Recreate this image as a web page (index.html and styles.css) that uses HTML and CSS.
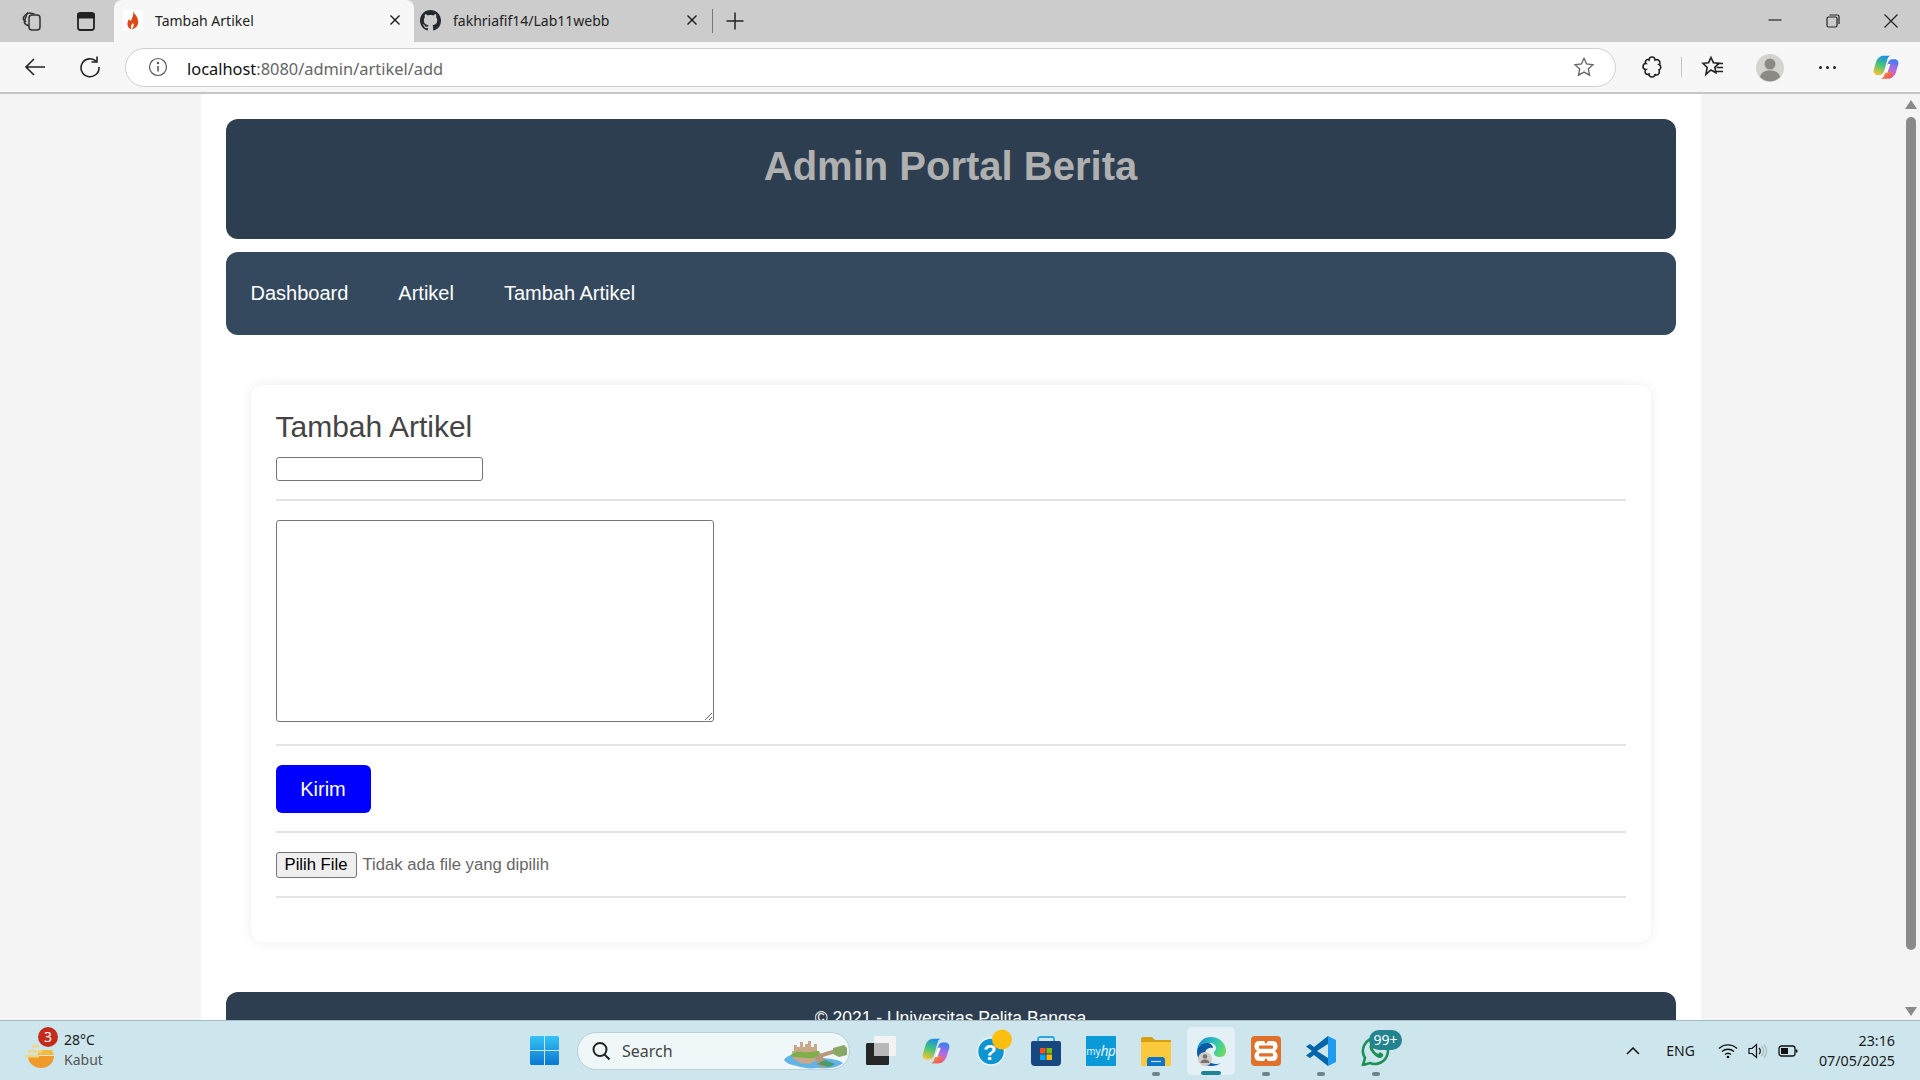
FILE: index.html
```html
<!DOCTYPE html>
<html lang="id">
<head>
  <meta charset="UTF-8" />
  <title>Tambah Artikel</title>
  <link rel="stylesheet" href="styles.css">
</head>
<body>

<svg class="defs" width="0" height="0">
  <defs>
    <linearGradient id="cpA" x1="0.6" y1="0" x2="0.3" y2="1">
      <stop offset="0" stop-color="#1a8fe8"/><stop offset="0.5" stop-color="#45c47a"/><stop offset="1" stop-color="#f2c531"/>
    </linearGradient>
    <linearGradient id="cpB" x1="0.6" y1="0" x2="0.4" y2="1">
      <stop offset="0" stop-color="#3a7df0"/><stop offset="0.5" stop-color="#b26be0"/><stop offset="1" stop-color="#f0609a"/>
    </linearGradient>
    <linearGradient id="cpC" x1="0" y1="0" x2="1" y2="1">
      <stop offset="0" stop-color="#f3a13a"/><stop offset="1" stop-color="#ea4c5a"/>
    </linearGradient>
    <linearGradient id="winG" x1="0" y1="0" x2="0" y2="1">
      <stop offset="0" stop-color="#35c3f5"/><stop offset="1" stop-color="#0a78d0"/>
    </linearGradient>
    <linearGradient id="edgeG" x1="0" y1="0.3" x2="1" y2="0.7">
      <stop offset="0" stop-color="#1b8ed6"/><stop offset="0.55" stop-color="#2fc7b6"/><stop offset="1" stop-color="#6fdc5a"/>
    </linearGradient>
    <symbol id="copilot" viewBox="0 0 32 32">
      <path d="M13 3h9c-2 0-3.500 1-4 3l-4 14c-.8 3-2.500 5-5 5H6c-3 0-5-3-4-6l3-10C6.500 6 9 3 13 3z" fill="url(#cpA)"/>
      <path d="M19 29h-9c2 0 3.500-1 4-3l4-14c.8-3 2.500-5 5-5h3c3 0 5 3 4 6l-3 10c-1.500 3-4 6-8 6z" fill="url(#cpB)"/>
      <path d="M10 29h9c1.500 0 3-.5 4-1.500l-1-6h-6l-2 4.500c-.8 2-2.500 3-4 3z" fill="url(#cpC)"/>
      <path d="M18 12.500h3l-3.500 10h-3z" fill="#fff"/>
    </symbol>
  </defs>
</svg>

<div class="tabbar">
  <div class="tab-tools">
    <svg class="ic" viewBox="0 0 24 24" fill="none" stroke="#333" stroke-width="1.500"><rect x="9" y="6" width="11" height="15" rx="3"/><path d="M9 17 6 15.500a3 3 0 0 1-1.500-3.500L6.500 6a3 3 0 0 1 3-2l5 1"/><path d="M6 13 4 11a3 3 0 0 1 .5-4L8 3.500"/></svg>
    <svg class="ic" viewBox="0 0 24 24" fill="none" stroke="#222" stroke-width="1.800"><rect x="4" y="4" width="16" height="17" rx="2.500"/><path d="M4 5.500h16v3H4z" fill="#222"/></svg>
  </div>
  <div class="tab active">
    <span class="favicon">
      <svg viewBox="0 0 20 20" width="20" height="20"><path d="M10 1c1 3 5 5 5 10 1 4-2 7-5 8-1 0-1-.5-.5-1 1-1 2-3 .5-5-1 1.500-3 2.500-1.500 6 .2.500-.3.500-1 0C4 17 3.500 13 6 9c.5 1 1 1.500 2 2 1-3 3-6 2-10z" fill="#dd4814"/></svg>
    </span>
    <span class="tab-title">Tambah Artikel</span>
    <svg class="tab-x" viewBox="0 0 12 12" stroke="#111" stroke-width="1.300"><path d="M1.500 1.500l9 9M10.500 1.500l-9 9"/></svg>
  </div>
  <div class="tab">
    <svg class="gh" viewBox="0 0 16 16" fill="#24292f"><path d="M8 0C3.580 0 0 3.580 0 8c0 3.540 2.290 6.530 5.470 7.590.4.070.55-.17.55-.38 0-.19-.01-.82-.01-1.490-2.010.37-2.530-.49-2.690-.94-.09-.23-.48-.94-.82-1.130-.28-.15-.68-.52-.01-.53.63-.01 1.080.58 1.230.82.72 1.210 1.870.87 2.330.66.070-.52.280-.87.510-1.070-1.780-.2-3.640-.89-3.640-3.950 0-.87.310-1.590.820-2.150-.08-.2-.36-1.020.08-2.120 0 0 .67-.21 2.200.82.640-.18 1.320-.27 2-.27s1.360.09 2 .27c1.530-1.040 2.200-.82 2.200-.82.440 1.100.160 1.920.080 2.120.51.560.82 1.270.82 2.150 0 3.070-1.870 3.750-3.650 3.950.290.250.54.730.54 1.480 0 1.070-.01 1.930-.01 2.200 0 .21.150.46.550.38A8.010 8.010 0 0 0 16 8c0-4.420-3.580-8-8-8z"/></svg>
    <span class="tab-title">fakhriafif14/Lab11webb</span>
    <svg class="tab-x" viewBox="0 0 12 12" stroke="#111" stroke-width="1.300"><path d="M1.500 1.500l9 9M10.500 1.500l-9 9"/></svg>
  </div>
  <span class="tab-sep"></span>
  <svg class="tab-plus" viewBox="0 0 20 20" stroke="#222" stroke-width="1.500"><path d="M10 1.500v17M1.500 10h17"/></svg>
  <div class="win-ctrl">
    <svg viewBox="0 0 14 14" stroke="#222" stroke-width="1.200" fill="none"><path d="M0.500 6h13"/></svg>
    <svg viewBox="0 0 14 14" stroke="#222" stroke-width="1.200" fill="none"><rect x="1" y="3" width="10" height="10" rx="1.500"/><path d="M3.500 1h8a1.500 1.500 0 0 1 1.500 1.500V10"/></svg>
    <svg viewBox="0 0 14 14" stroke="#222" stroke-width="1.200" fill="none"><path d="M.5.5l13 13M13.500.5l-13 13"/></svg>
  </div>
</div>

<div class="toolbar">
  <svg class="ic nav-back" viewBox="0 0 24 24" fill="none" stroke="#222" stroke-width="1.600"><path d="M22 12H3M11 4l-8 8 8 8"/></svg>
  <svg class="ic nav-reload" viewBox="0 0 24 24" fill="none" stroke="#222" stroke-width="1.600"><path d="M18.500 6.500A9 9 0 1 0 21 12"/><path d="M19 1.500v5.500h-5.500"/></svg>
  <div class="urlbar">
    <svg class="url-info" viewBox="0 0 20 20" fill="none" stroke="#555" stroke-width="1.200"><circle cx="10" cy="10" r="8.500"/><path d="M10 9v5.500" stroke-width="1.500"/><circle cx="10" cy="6" r=".6" fill="#555"/></svg>
    <span class="url-text"><b>localhost</b>:8080/admin/artikel/add</span>
    <svg class="url-star" viewBox="0 0 24 24" fill="none" stroke="#666" stroke-width="1.500"><path d="M12 2.500l2.900 6.200 6.800.8-5 4.600 1.300 6.700-6-3.300-6 3.300 1.300-6.700-5-4.600 6.800-.8z"/></svg>
  </div>
  <svg class="ic ext" viewBox="0 0 24 24" fill="none" stroke="#222" stroke-width="1.600"><path d="M9 5a3 3 0 0 1 6 0c2-1 5 0 5 3 0 1-1 1.500-1 1.500a3 3 0 0 1 0 5.500c1 2 0 5-2.500 5-1 0-1.500-1-1.500-1a3 3 0 0 1-6 0c-2 1-4 0-4-2.500 0-1 1-2 1-2a3 3 0 0 1 0-6C4 6.500 7 3.500 9 5z"/></svg>
  <span class="tool-sep"></span>
  <svg class="ic fav" viewBox="0 0 24 24" fill="none" stroke="#222" stroke-width="1.600"><path d="M10 2.500l2.400 5.200 5.600.6-4.200 3.900 1.100 5.600-5-2.800-5 4.300 1.300-6.900L2 8.300l5.600-.6z"/><path d="M15 8.500h7M15.500 12.500h6.500M15 16.500h7"/></svg>
  <span class="avatar">
    <svg viewBox="0 0 28 28" width="28" height="28"><circle cx="14" cy="14" r="14" fill="#d5d3d0"/><circle cx="14" cy="10" r="5.500" fill="#8d8984"/><path d="M4 23c1-5 5-6.500 10-6.500s9 1.500 10 6.500a14 14 0 0 1-20 0z" fill="#8d8984"/></svg>
  </span>
  <span class="dots"><i></i><i></i><i></i></span>
  <svg class="cp-top"><use href="#copilot"/></svg>
</div>

<div class="viewport">
  <div class="page">
    <div class="container">
      <header class="site-head">
        <h1>Admin Portal Berita</h1>
      </header>
      <nav class="site-nav">
        <a href="#">Dashboard</a>
        <a href="#">Artikel</a>
        <a href="#">Tambah Artikel</a>
      </nav>
      <section class="card">
        <h2>Tambah Artikel</h2>
        <input type="text" class="f-title" />
        <hr class="rule r-title" />
        <textarea class="f-body"></textarea>
        <hr class="rule r-body" />
        <button class="btn-send">Kirim</button>
        <hr class="rule r-send" />
        <div class="file-row">
          <button class="btn-file">Pilih File</button>
          <span class="file-note">Tidak ada file yang dipilih</span>
        </div>
        <hr class="rule r-file" />
      </section>
      <footer class="site-foot">&copy; 2021 - Universitas Pelita Bangsa</footer>
    </div>
  </div>
  <div class="scrollbar">
    <span class="arrow up"></span>
    <span class="thumb"></span>
    <span class="arrow down"></span>
  </div>
</div>

<div class="taskbar">
  <div class="weather">
    <div class="w-icon">
      <svg viewBox="0 0 32 32" width="32" height="32"><path d="M4 18h26a13 12 0 0 1-26 0z" fill="#ef9a2b"/><path d="M14 12h14l2 5H14z" fill="#f5bb3d"/><path d="M8 7h7v2.500H8zM4 12h14v2.500H4zM1 17h14v2.500H1z" fill="#f4d582"/></svg>
      <span class="w-badge">3</span>
    </div>
    <div class="w-text"><span>28°C</span><span class="w-sub">Kabut</span></div>
  </div>
  <div class="task-center">
    <svg class="win-logo" viewBox="0 0 29 29"><path d="M0 1.500A1.500 1.500 0 0 1 1.500 0H14v14H0zM15 0h12.500A1.500 1.500 0 0 1 29 1.500V14H15zM0 15h14v14H1.500A1.500 1.500 0 0 1 0 27.500zM15 15h14v12.500a1.500 1.500 0 0 1-1.500 1.500H15z" fill="url(#winG)"/></svg>
    <div class="search">
      <svg class="s-ic" viewBox="0 0 20 20" fill="none" stroke="#222" stroke-width="2"><circle cx="9" cy="8.500" r="6.500"/><path d="M13.500 13.500l5 5"/></svg>
      <span>Search</span>
      <svg class="s-art" viewBox="0 0 65 30"><path d="M1 21c3-5 11-7 20-6l20 4c8 1 15 2 19 5-6 5-16 6-26 5-7 1-14 0-20-2-6-1-11-3-13-6z" fill="#62b4e6"/><path d="M9 12h2V6h3v2h3V3h3v5h2V5h3V2h3v6h3V5h3v8l1 7-8 5-10-1-7-5z" fill="#c8a78b"/><path d="M7 17c4-5 10-5 13-4 5 1 11-1 16-1l2 5c-6 1-8 3-14 2-6-1-11 0-17-2z" fill="#7db04a"/><path d="M32 19l5 9h7l-4-10 16-5v-4L36 15z" fill="#b8987c"/><path d="M50 9l11-3 3 3v7l-8 2-6-3z" fill="#8aa865"/><path d="M34 25l12 3 6-3-10-4z" fill="#4d9a68"/></svg>
    </div>
    <div class="apps">
      <span class="app">
        <svg viewBox="0 0 30 30"><rect x="8" y="0" width="22" height="20" rx="1.500" fill="#f3f3f3"/><rect x="0" y="7" width="23" height="22" rx="1.500" fill="#262626"/><rect x="8" y="7" width="15" height="13" fill="#b9b9b9"/></svg>
      </span>
      <span class="app"><svg><use href="#copilot"/></svg></span>
      <span class="app">
        <svg class="over" viewBox="0 0 30 30"><circle cx="15" cy="15.500" r="13.500" fill="#0f94d2" stroke="#e8f6fb" stroke-width="1.500"/><text x="14" y="24" class="help-q">?</text><circle cx="26" cy="3.500" r="10" fill="#fdbf0f"/></svg>
      </span>
      <span class="app">
        <svg viewBox="0 0 30 30"><path d="M7 6V3a2 2 0 0 1 2-2h12a2 2 0 0 1 2 2v3" fill="none" stroke="#29a8e0" stroke-width="1.800"/><path d="M0 7a2 2 0 0 1 2-2h26a2 2 0 0 1 2 2v19a4 4 0 0 1-4 4H4a4 4 0 0 1-4-4z" fill="#17477f"/><rect x="9" y="12" width="5.500" height="5.500" fill="#f25022"/><rect x="15.500" y="12" width="5.500" height="5.500" fill="#7fba00"/><rect x="9" y="18.500" width="5.500" height="5.500" fill="#00a4ef"/><rect x="15.500" y="18.500" width="5.500" height="5.500" fill="#ffb900"/></svg>
      </span>
      <span class="app myhp">my<i>hp</i></span>
      <span class="app has-dot">
        <svg viewBox="0 0 30 30"><path d="M0 3a2 2 0 0 1 2-2h9l3 3h16v4H0z" fill="#d69f12"/><path d="M0 6h30v24H0z" fill="#fbc93d"/><path d="M6 30v-6a3 3 0 0 1 3-3h12a3 3 0 0 1 3 3v6z" fill="#0f74c8"/><path d="M10 25.500h10" stroke="#bfe3fb" stroke-width="1.200"/></svg>
      </span>
      <span class="app current">
        <svg viewBox="0 0 30 30"><path d="M15 1c8 0 15 6 15 14 0 3-2 6-6 6-3 0-6-1-6-4 0-2 2-2 2-5 0-3-3-5-6-5C7 7 1 11 1 16 1 7 7 1 15 1z" fill="url(#edgeG)"/><path d="M1 16c0-5 5-9 10-9 3 0 6 2 6 5-4-1-8 1-8 6 0 5 5 10 11 10 2 0 3-.3 5-1-3 2-6 3-10 3C7 30 1 24 1 16z" fill="#0c59a4"/><circle cx="9" cy="23" r="7" fill="#cfccc8"/><circle cx="9" cy="20.500" r="2.300" fill="#77736e"/><path d="M4.500 27c.5-3 2.500-3.500 4.500-3.500s4 .5 4.500 3.500z" fill="#77736e"/></svg>
      </span>
      <span class="app has-dot">
        <svg viewBox="0 0 30 30"><rect width="30" height="30" rx="4" fill="#e0702a"/><path d="M8 5h5l2 3 2-3h5c2.500 0 4.500 2 4.500 4.500v1c0 2-1 3.500-3 4.500 2 1 3 2.500 3 4.500v1c0 2.500-2 4.500-4.500 4.500h-5l-2-3-2 3H8c-2.500 0-4.500-2-4.500-4.500v-1c0-2 1-3.500 3-4.500-2-1-3-2.500-3-4.500v-1C3.500 7 5.500 5 8 5z" fill="#fff"/><rect x="8" y="9.500" width="14" height="3.200" rx="1" fill="#e0702a"/><rect x="8" y="17.300" width="14" height="3.200" rx="1" fill="#e0702a"/></svg>
      </span>
      <span class="app has-dot">
        <svg viewBox="0 0 30 30"><path d="M22 0l8 4v22l-8 4z" fill="#1f9cf0"/><path d="M22 0v8L11 15l11 7v8L8 19l-4 3-4-2.500L6 15 0 10.500 4 8l4 3z" fill="#0065a9"/></svg>
      </span>
      <span class="app has-dot wa">
        <svg viewBox="0 0 30 30"><path d="M15 2a13 13 0 0 0-11 20L2 29l7-2A13 13 0 1 0 15 2z" fill="none" stroke="#1b8f55" stroke-width="2.600"/><path d="M10 8c-2 1-2 4 0 7s5 6 8 7c3 0 5-2 4-4l-3-2-2 2c-2-1-4-3-5-5l2-2-2-3z" fill="#1b8f55"/></svg>
        <span class="wa-badge">99+</span>
      </span>
    </div>
  </div>
  <div class="tray">
    <svg class="chev" viewBox="0 0 14 8" fill="none" stroke="#111" stroke-width="1.500"><path d="M1 7l6-6 6 6"/></svg>
    <span class="lang">ENG</span>
    <svg class="t-wifi" viewBox="0 0 20 16" fill="none" stroke="#111" stroke-width="1.400"><path d="M1 5.500a13 13 0 0 1 18 0M4 8.500a9 9 0 0 1 12 0M7 11.500a4.500 4.500 0 0 1 6 0"/><circle cx="10" cy="14" r="1.300" fill="#111" stroke="none"/></svg>
    <svg class="t-vol" viewBox="0 0 20 16" fill="none" stroke="#111" stroke-width="1.200"><path d="M1 5.500h3L8.500 1.500v13L4 10.500H1z"/><path d="M11 5a4 4 0 0 1 0 6"/><path d="M13.500 3a7 7 0 0 1 0 10M16 1.500a9.500 9.500 0 0 1 0 13" stroke="#a9b9bd"/></svg>
    <svg class="t-bat" viewBox="0 0 20 12" fill="none" stroke="#111" stroke-width="1.300"><rect x="1" y="1" width="16" height="10" rx="2.500"/><rect x="3" y="3" width="7" height="6" fill="#111" stroke="none"/><path d="M18.500 4.500v3" stroke-width="1.800"/></svg>
    <div class="clock"><span>23:16</span><span>07/05/2025</span></div>
  </div>
</div>

</body>
</html>
```

FILE: styles.css
```css
* {
  box-sizing: border-box;
}
html, body {
  margin: 0;
  height: 100%;
  overflow: hidden;
}
body {
  display: flex;
  flex-direction: column;
  font-family: "Liberation Sans", Arial, sans-serif;
  background: #f4f4f4;
}
.defs {
  position: absolute;
}
.ic {
  width: 24px;
  height: 24px;
  flex: none;
}

/* tabs */
.tabbar {
  height: 42px;
  flex: none;
  background: #cccccc;
  display: flex;
  align-items: flex-end;
  font-family: "Noto Sans", sans-serif;
  font-size: 14px;
  color: #222;
}
.tab-tools {
  width: 114px;
  height: 42px;
  display: flex;
  align-items: center;
  gap: 30px;
  padding-left: 20px;
}
.tab {
  width: 300px;
  height: 42px;
  display: flex;
  align-items: center;
  padding: 0 16px 2px 6px;
}
.tab.active {
  background: #f7f7f7;
  border-radius: 8px 8px 0 0;
  padding-left: 9px;
  padding-right: 13px;
}
.favicon {
  width: 20px;
  height: 20px;
  background: #fff;
  margin-right: 12px;
  flex: none;
  display: flex;
}
.gh {
  width: 21px;
  height: 21px;
  margin-right: 12px;
  flex: none;
}
.tab-title {
  flex: 1;
  white-space: nowrap;
}
.tab-x {
  width: 12px;
  height: 12px;
  flex: none;
}
.tab-sep {
  width: 1px;
  height: 24px;
  background: #777;
  margin: 0 0 9px -2px;
}
.tab-plus {
  width: 20px;
  height: 20px;
  margin: 0 0 11px 12px;
}
.win-ctrl {
  margin-left: auto;
  height: 42px;
  display: flex;
  align-items: center;
  gap: 44px;
  padding-right: 22px;
}
.win-ctrl svg {
  width: 14px;
  height: 14px;
}

/* toolbar */
.toolbar {
  height: 52px;
  flex: none;
  background: #f7f7f7;
  border-bottom: 2px solid #c6c6c6;
  display: flex;
  align-items: center;
  padding: 0 0 0 23px;
}
.nav-reload {
  margin-left: 31px;
}
.urlbar {
  width: 1491px;
  height: 39px;
  margin-left: 23px;
  background: #fff;
  border: 1px solid #cfcfcf;
  border-radius: 20px;
  display: flex;
  align-items: center;
  padding: 0 20px 0 22px;
}
.url-info {
  width: 20px;
  height: 20px;
}
.url-text {
  margin-left: 19px;
  margin-top: 2px;
  flex: 1;
  font-family: "Noto Sans", sans-serif;
  font-size: 16.400px;
  color: #666;
}
.url-text b {
  font-weight: 400;
  color: #111;
}
.url-star {
  width: 22px;
  height: 22px;
}
.ext {
  margin-left: 24px;
}
.tool-sep {
  width: 1px;
  height: 20px;
  background: #c4c4c4;
  margin: 0 19px 0 17px;
}
.avatar {
  display: flex;
  margin-left: 31px;
  margin-top: 2px;
}
.dots {
  display: flex;
  gap: 4px;
  margin-left: 35px;
}
.dots i {
  width: 3px;
  height: 3px;
  background: #222;
  border-radius: 50%;
}
.cp-top {
  width: 28px;
  height: 28px;
  margin-left: 36px;
}

/* page */
.viewport {
  flex: 1;
  min-height: 0;
  display: flex;
}
.page {
  flex: 1;
  min-width: 0;
  overflow: hidden;
}
.container {
  width: 1500px;
  margin: 0 auto;
  padding: 25px;
  background: #fff;
}
.site-head {
  height: 120px;
  background: #2c3e50;
  border-radius: 12px;
  padding-top: 24px;
  text-align: center;
}
.site-head h1 {
  margin: 0;
  font-size: 40px;
  line-height: 46px;
  color: #b0b0b0;
}
.site-nav {
  height: 83px;
  margin-top: 13px;
  background: #34495e;
  border-radius: 12px;
  padding: 0 25px;
  display: flex;
  align-items: center;
  gap: 50px;
}
.site-nav a {
  color: #fff;
  text-decoration: none;
  font-size: 20px;
}
.card {
  margin: 50px 25px;
  padding: 25px 25px 45px;
  background: #fff;
  border-radius: 12px;
  box-shadow: 0 0 12px rgba(0, 0, 0, 0.08);
  height: 557px;
}
.card h2 {
  margin: 0;
  font-size: 30px;
  font-weight: 400;
  line-height: 33px;
  color: #444;
}
.f-title {
  display: block;
  width: 207px;
  height: 24px;
  margin-top: 14px;
  border: 1px solid #767676;
  border-radius: 3px;
}
.f-body {
  display: block;
  width: 438px;
  height: 202px;
  border: 1px solid #767676;
  border-radius: 3px;
}
.rule {
  border: 0;
  height: 2px;
  background: #e4e4e4;
  margin: 0;
}
.r-title {
  margin: 18px 0 19px;
}
.r-body {
  margin: 22px 0 19px;
}
.r-send {
  margin: 18px 0 19px;
}
.r-file {
  margin-top: 18px;
}
.btn-send {
  display: block;
  width: 95px;
  height: 48px;
  border: 0;
  border-radius: 6px;
  background: #0000ff;
  color: #fff;
  font-family: inherit;
  font-size: 20px;
}
.file-row {
  height: 26px;
  display: flex;
  align-items: center;
  gap: 6px;
}
.btn-file {
  width: 81px;
  height: 26px;
  padding: 0;
  border: 1px solid #767676;
  border-radius: 3px;
  background: #efefef;
  color: #000;
  font-family: inherit;
  font-size: 16.670px;
}
.file-note {
  font-size: 16.670px;
  color: #666;
}
.site-foot {
  height: 100px;
  background: #2c3e50;
  border-radius: 12px 12px 0 0;
  padding-top: 16px;
  text-align: center;
  color: #fff;
  font-size: 17.500px;
}

/* scrollbar */
.scrollbar {
  width: 19px;
  flex: none;
  background: #f4f4f4;
  display: flex;
  flex-direction: column;
  align-items: center;
  padding: 6px 0 4px;
}
.arrow {
  width: 0;
  height: 0;
  border-left: 6.500px solid transparent;
  border-right: 6.500px solid transparent;
}
.arrow.up {
  border-bottom: 9px solid #8a8a8a;
}
.arrow.down {
  border-top: 9px solid #8a8a8a;
}
.thumb {
  width: 10px;
  height: 833px;
  margin: 8px 0 auto;
  background: #8a8a8a;
  border-radius: 5px;
}

/* taskbar */
.taskbar {
  height: 60px;
  flex: none;
  background: #cde5ec;
  border-top: 1px solid #a9bcc3;
  display: flex;
  align-items: center;
  font-family: "Noto Sans", sans-serif;
  color: #1b1b1b;
  font-size: 14px;
}
.weather {
  width: 530px;
  display: flex;
  align-items: center;
  padding-left: 24px;
  gap: 8px;
}
.w-icon {
  position: relative;
  width: 32px;
  height: 32px;
  margin-top: 6px;
}
.w-badge {
  position: absolute;
  top: -11px;
  right: -2px;
  width: 20px;
  height: 20px;
  background: #c42b1c;
  color: #fff;
  border-radius: 50%;
  font-size: 14px;
  line-height: 20px;
  text-align: center;
}
.w-text {
  display: flex;
  flex-direction: column;
  line-height: 20px;
  margin-top: -2px;
}
.w-sub {
  color: #555;
}
.task-center {
  display: flex;
  align-items: center;
}
.win-logo {
  width: 29px;
  height: 29px;
}
.search {
  width: 273px;
  height: 38px;
  margin-left: 18px;
  background: #eff7f9;
  border: 1px solid #b8d0d8;
  border-radius: 19px;
  display: flex;
  align-items: center;
  padding-left: 13px;
  color: #444;
  font-size: 16px;
  position: relative;
}
.s-ic {
  width: 20px;
  height: 20px;
  margin-right: 11px;
}
.s-art {
  position: absolute;
  right: 1px;
  top: 6px;
  width: 65px;
  height: 30px;
}
.apps {
  display: flex;
  align-items: center;
  margin-left: 3px;
}
.app {
  width: 55px;
  height: 48px;
  display: flex;
  align-items: center;
  justify-content: center;
  position: relative;
  flex: none;
}
.app svg {
  width: 30px;
  height: 30px;
}
.app svg.over {
  overflow: visible;
}
.myhp {
  width: 30px;
  height: 30px;
  margin: 0 12.500px;
  background: #0a9ad8;
  color: #e6f5fb;
  font-size: 10px;
  border-radius: 1px;
}
.myhp i {
  font-size: 14px;
  letter-spacing: -1px;
}
.current {
  background: #e3f1f6;
  border-radius: 5px;
  width: 48px;
  margin: 0 3.500px;
}
.current::after, .has-dot::after {
  content: "";
  position: absolute;
  left: 50%;
  bottom: -2px;
  width: 8px;
  height: 4px;
  margin-left: -4px;
  background: #6f8189;
  border-radius: 2px;
}
.current::after {
  width: 20px;
  margin-left: -10px;
  bottom: 0;
  background: #1e8494;
}
.has-dot::after {
  bottom: -1px;
}
.help-q {
  fill: #fff;
  font: 700 22px "Liberation Sans", sans-serif;
  text-anchor: middle;
}
.wa-badge {
  position: absolute;
  top: 3px;
  left: 21px;
  width: 33px;
  height: 20px;
  background: #23838f;
  color: #fff;
  border-radius: 10px;
  font-size: 14px;
  line-height: 20px;
  text-align: center;
}
.tray {
  margin-left: auto;
  display: flex;
  align-items: center;
  padding-right: 25px;
}
.chev {
  width: 14px;
  height: 8px;
}
.lang {
  margin-left: 26px;
}
.t-wifi {
  width: 20px;
  height: 16px;
  margin-left: 23px;
}
.t-vol {
  width: 20px;
  height: 16px;
  margin-left: 10px;
}
.t-bat {
  width: 20px;
  height: 12px;
  margin-left: 10px;
}
.clock {
  display: flex;
  flex-direction: column;
  align-items: flex-end;
  line-height: 20px;
  margin-left: 21px;
  font-size: 14.300px;
}
```
